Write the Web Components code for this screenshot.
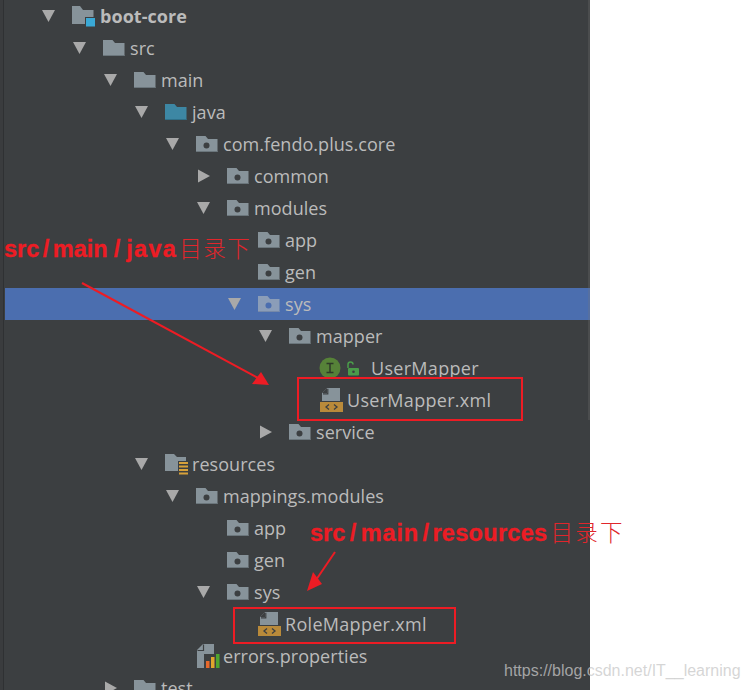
<!DOCTYPE html>
<html><head><meta charset="utf-8"><style>
html,body{margin:0;padding:0;background:#fff;overflow:hidden}
body{width:748px;height:690px}
</style></head><body>
<project-view>
<tree-row level="0" arrow="down" icon="module" bold>boot-core</tree-row>
<tree-row level="1" arrow="down" icon="folder">src</tree-row>
<tree-row level="2" arrow="down" icon="folder">main</tree-row>
<tree-row level="3" arrow="down" icon="source">java</tree-row>
<tree-row level="4" arrow="down" icon="package">com.fendo.plus.core</tree-row>
<tree-row level="5" arrow="right" icon="package">common</tree-row>
<tree-row level="5" arrow="down" icon="package">modules</tree-row>
<tree-row level="6" icon="package">app</tree-row>
<tree-row level="6" icon="package">gen</tree-row>
<tree-row level="6" arrow="down" icon="package" selected>sys</tree-row>
<tree-row level="7" arrow="down" icon="package">mapper</tree-row>
<tree-row level="8" icon="interface">UserMapper</tree-row>
<tree-row level="8" icon="xml">UserMapper.xml</tree-row>
<tree-row level="7" arrow="right" icon="package">service</tree-row>
<tree-row level="3" arrow="down" icon="resources">resources</tree-row>
<tree-row level="4" arrow="down" icon="package">mappings.modules</tree-row>
<tree-row level="5" icon="package">app</tree-row>
<tree-row level="5" icon="package">gen</tree-row>
<tree-row level="5" arrow="down" icon="package">sys</tree-row>
<tree-row level="6" icon="xml">RoleMapper.xml</tree-row>
<tree-row level="4" icon="props">errors.properties</tree-row>
<tree-row level="2" arrow="right" icon="folder">test</tree-row>
<red-note slot="over" style="left:4px;top:232px">src<i>/</i>main<i class="w">/</i><b>java</b><span>目录下</span></red-note>
<red-note slot="over" style="left:310px;top:516px">src<i class="m">/</i><em>main</em><i>/</i><u>resources</u><span class="s">目录下</span></red-note>
<red-box slot="over" style="left:297px;top:377px;width:226px;height:44px"></red-box>
<red-box slot="over" style="left:233px;top:607px;width:223px;height:37px"></red-box>
<red-arrows slot="over"></red-arrows>
<water-mark slot="over">https://blog.csdn.net/IT__learning</water-mark>
</project-view>
<script>
const FOLDER='M0 1h9.500l2.500 3h9.500v13H0z',EDGE='M0 16h21.500v1H0z';
const ICONS={
folder:`<svg width="22" height="18" viewBox="0 0 22 18"><path d="${FOLDER}" fill="#87939a"/><path d="${EDGE}" fill="#6b767c"/></svg>`,
source:`<svg width="22" height="18" viewBox="0 0 22 18"><path d="${FOLDER}" fill="#3d87a4"/><path d="${EDGE}" fill="#2f7089"/></svg>`,
package:`<svg width="22" height="18" viewBox="0 0 22 18"><path d="${FOLDER}" fill="#87939a"/><path d="${EDGE}" fill="#6b767c"/><circle cx="10.500" cy="10.500" r="3" fill="#3c3f41"/></svg>`,
packageSel:`<svg width="22" height="18" viewBox="0 0 22 18"><path d="${FOLDER}" fill="#8b9db8"/><path d="${EDGE}" fill="#7689a9"/><circle cx="10.500" cy="10.500" r="3" fill="#4b6eaf"/></svg>`,
module:`<svg width="24" height="22" viewBox="0 0 24 22"><path d="M0 1h8l3 4h10.500v14H0z" fill="#87939a"/><rect x="13" y="12" width="11" height="9.500" fill="#3c3f41"/><rect x="14" y="13" width="9" height="8.500" fill="#3aa9d6"/></svg>`,
resources:`<svg width="24" height="22" viewBox="0 0 24 22"><path d="M0 1h9l3 3h9v14H0z" fill="#87939a"/><rect x="13" y="8" width="11" height="13" fill="#3c3f41"/><path d="M14 9h9v2h-9zM14 12.500h9v2h-9zM14 16h9v2h-9zM14 19.500h9v2h-9z" fill="#d7a13a"/></svg>`,
xml:`<svg width="24" height="24" viewBox="0 0 24 24"><path d="M7 0h13v13H2V5z" fill="#87939a"/><path d="M7 0v5H2z" fill="#3c3f41"/><path d="M7.800 .8v5H3" fill="none" stroke="#3c3f41" stroke-width="1.200"/><rect x="0" y="14" width="23" height="10" fill="#b98a3a"/><path d="M9 16.500l-3 2.500 3 2.500M14 16.500l3 2.500-3 2.500" fill="none" stroke="#3c3f41" stroke-width="1.300"/></svg>`,
props:`<svg width="24" height="24" viewBox="0 0 24 24"><path d="M7 0h11v24H1V6z" fill="#87939a"/><path d="M7.500 .5v6H1.500" fill="none" stroke="#3c3f41" stroke-width="1.200"/><rect x="8" y="10" width="16" height="14" fill="#3c3f41"/><rect x="10" y="17" width="3.500" height="7" fill="#e8692b"/><rect x="15" y="13" width="3.500" height="11" fill="#e0a52c"/><rect x="20" y="10" width="3.500" height="14" fill="#4fa52f"/></svg>`,
interface:`<svg width="44" height="22" viewBox="0 0 44 22"><circle cx="11" cy="11" r="10.500" fill="#568238"/><path d="M7.500 6.500h7M7.500 15.500h7M11 6.500v9" stroke="#2e3a28" stroke-width="1.500" fill="none"/><path d="M29 11V7.500a2.500 2.500 0 0 1 5 0" stroke="#4a9c4a" stroke-width="1.500" fill="none"/><rect x="29" y="11" width="11" height="7.500" rx="1" fill="#4a9c4a"/><circle cx="34.500" cy="14.800" r="1.300" fill="#3c3f41"/></svg>`
};
const ICON_W={folder:22,source:22,package:22,packageSel:22,module:24,resources:24,xml:24,props:24,interface:44};
const ICON_GAP={folder:5,source:5,package:5,packageSel:5,module:4,resources:3,xml:3,props:3,interface:8};
class TreeRow extends HTMLElement{
 connectedCallback(){
  if(this.shadowRoot)return;
  const lvl=+this.getAttribute('level');
  const arrow=this.getAttribute('arrow');
  let icon=this.getAttribute('icon');
  const sel=this.hasAttribute('selected');
  if(sel&&icon==='package')icon='packageSel';
  const tri=arrow==='down'?'<path d="M0 2h13L6.500 14z"/>':arrow==='right'?'<path d="M1 1.500L13 8 1 14.500z"/>':'';
  const ls=icon==='xml'||icon==='interface'?'.3px':'.05px';
  const s=this.attachShadow({mode:'open'});
  s.innerHTML=`<style>
  :host{display:flex;align-items:center;height:32px;padding-left:${35+lvl*31}px;box-sizing:border-box;overflow:hidden;color:#bbb;
   font:18px/32px "Open Sans","Noto Sans",sans-serif;letter-spacing:${ls};white-space:nowrap;${sel?'background:#4b6eaf;margin-left:5px;padding-left:'+(30+lvl*31)+'px;':''}}
  :host([bold]){font-weight:700}
  .tw{width:37px;flex:none;display:flex}
  svg{display:block;flex:none}
  .tw svg{fill:#a9a9a9;margin-left:7px}
  .ic{flex:none;width:${ICON_W[icon]}px;margin-right:${ICON_GAP[icon]}px;${icon==='interface'?'margin-left:-1px':''}}
  </style><span class="tw">${tri?`<svg width="14" height="16" viewBox="0 0 14 16">${tri}</svg>`:''}</span><span class="ic">${ICONS[icon]}</span><slot></slot>`;
 }
}
customElements.define('tree-row',TreeRow);
class ProjectView extends HTMLElement{
 constructor(){super();const s=this.attachShadow({mode:'open'});
 s.innerHTML=`<style>
 :host{display:block;position:relative;width:748px;height:690px;overflow:hidden;background:#fff}
 .panel{width:590px;height:690px;background:#3c3f41;overflow:hidden;position:relative}
 .edge{position:absolute;left:0;top:0;bottom:0;width:3px;background:#3a3c3e;border-right:1px solid #2f3133;z-index:2}
 .bar{position:absolute;right:0;top:0;height:420px;width:2px;background:rgba(120,120,120,.25);z-index:2}
 </style><div class="panel"><div class="edge"></div><div class="bar"></div><slot></slot></div><slot name="over"></slot>`;}
}
customElements.define('project-view',ProjectView);
class RedNote extends HTMLElement{
 constructor(){super();const s=this.attachShadow({mode:'open'});
 s.innerHTML=`<style>
 :host{position:absolute;color:#ed1c24;font:700 23.500px/30px "Liberation Sans",sans-serif;white-space:nowrap;-webkit-text-stroke:.3px #ed1c24}
 ::slotted(i){font-style:normal;margin:0 3.500px}
 ::slotted(i.w){margin:0 6px}
 ::slotted(i.m){margin:0 4.500px}
 ::slotted(b){letter-spacing:1.300px}
 ::slotted(em){font-style:normal;letter-spacing:.8px}
 ::slotted(u){text-decoration:none;letter-spacing:.3px}
 ::slotted(span){font:300 22.500px/30px "Noto Sans CJK SC",sans-serif;letter-spacing:1.500px;margin-left:2px;-webkit-text-stroke:0;color:#e0262c}
 ::slotted(span.s){letter-spacing:2.200px;margin-left:3px}
 </style><slot></slot>`;}
}
customElements.define('red-note',RedNote);
class RedBox extends HTMLElement{
 constructor(){super();const s=this.attachShadow({mode:'open'});
 s.innerHTML=`<style>:host{position:absolute;box-sizing:border-box;border:2px solid #ed1c24}</style>`;}
}
customElements.define('red-box',RedBox);
class RedArrows extends HTMLElement{
 constructor(){super();const s=this.attachShadow({mode:'open'});
 s.innerHTML=`<style>:host{position:absolute;left:0;top:0}svg{display:block}</style>
 <svg width="748" height="690" viewBox="0 0 748 690"><g stroke="#ed1c24" stroke-width="2" fill="#ed1c24">
 <path d="M82 283L258 378"/><path d="M269 385L252 384 261 372z" stroke-width="0"/>
 <path d="M335 552L316 580"/><path d="M307 591L313 572 322 584z" stroke-width="0"/>
 </g></svg>`;}
}
customElements.define('red-arrows',RedArrows);
class WaterMark extends HTMLElement{
 constructor(){super();const s=this.attachShadow({mode:'open'});
 s.innerHTML=`<style>:host{position:absolute;left:504px;top:660px;color:rgba(200,200,200,.75);font:16px/22px "Liberation Sans",sans-serif;white-space:nowrap}</style><slot></slot>`;}
}
customElements.define('water-mark',WaterMark);
</script>
</body></html>
